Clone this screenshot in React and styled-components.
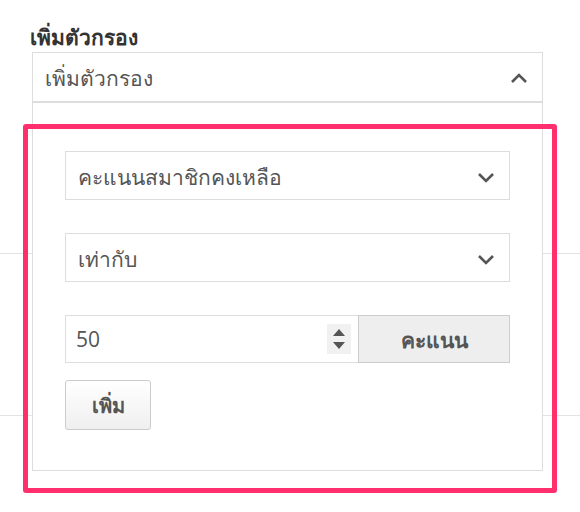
import React from 'react';
import styled, { createGlobalStyle } from 'styled-components';

const GlobalStyle = createGlobalStyle`
  html, body {
    margin: 0;
    padding: 0;
    background: #fff;
  }
  body {
    font-family: "Open Sans", "Noto Sans", sans-serif;
    color: #555;
  }
  * {
    box-sizing: border-box;
  }
`;

const Page = styled.div`
  position: relative;
  width: 580px;
  height: 512px;
  overflow: hidden;
`;

const Title = styled.div`
  height: 52px;
  padding-left: 30px;
  padding-top: 22px;
  font-size: 21px;
  line-height: 30px;
  font-weight: 700;
  color: #333;
`;

const FilterBox = styled.div`
  position: relative;
  margin-left: 32px;
  width: 511px;
`;

const SelectBar = styled.div`
  display: flex;
  align-items: center;
  justify-content: space-between;
  height: 50px;
  padding: 3px 14px 0 12px;
  border: 1px solid #ddd;
  background: #fff;
  font-size: 21px;
  color: #555;
`;

const BackRow = styled.div`
  height: ${({ $height }) => $height}px;
  border-bottom: 1px solid #e3e3e3;
`;

const Dropdown = styled.div`
  position: absolute;
  top: 100%;
  left: 0;
  width: 511px;
  height: 369px;
  background: #fff;
  border: 1px solid #ddd;
  padding: 48px 32px 0 32px;
  display: flex;
  flex-direction: column;
`;

const Field = styled(SelectBar)`
  height: 49px;
  margin-bottom: 33px;
`;

const NumberRow = styled.div`
  display: flex;
  height: 48px;
  margin-bottom: 17px;
`;

const NumberInput = styled.div`
  flex: 1;
  display: flex;
  align-items: center;
  justify-content: space-between;
  padding: 0 7px 0 10px;
  border: 1px solid #ddd;
  border-right: none;
  font-size: 21px;
  color: #555;
`;

const Spinner = styled.div`
  width: 24px;
  height: 30px;
  background: #f1f1f1;
  display: flex;
  align-items: center;
  justify-content: center;
`;

const Addon = styled.div`
  width: 152px;
  display: flex;
  align-items: center;
  justify-content: center;
  padding-top: 2px;
  background: #eee;
  border: 1px solid #ccc;
  font-size: 21px;
  font-weight: 600;
  color: #555;
`;

const AddButton = styled.button`
  width: 86px;
  height: 50px;
  border: 1px solid #ccc;
  border-radius: 3px;
  background: linear-gradient(#fff, #efefef);
  font-family: inherit;
  font-size: 20px;
  font-weight: 600;
  color: #555;
  padding: 2px 0 0;
`;

const Highlight = styled.div`
  position: absolute;
  left: 23px;
  top: 124px;
  width: 534px;
  height: 369px;
  border: 5px solid #ff2e6c;
  border-radius: 3px;
  pointer-events: none;
`;

const Chevron = ({ up }) => (
  <svg width="18" height="11" viewBox="0 0 18 11">
    <polyline
      points={up ? '2,9 9,2 16,9' : '2,2 9,9 16,2'}
      fill="none"
      stroke="#555"
      strokeWidth="2.6"
    />
  </svg>
);

const SpinArrows = () => (
  <svg width="14" height="22" viewBox="0 0 14 22">
    <polygon points="7,1 13,8 1,8" fill="#555" />
    <polygon points="1,14 13,14 7,21" fill="#555" />
  </svg>
);

const App = () => (
  <Page>
    <GlobalStyle />
    <Title>เพิ่มตัวกรอง</Title>
    <FilterBox>
      <SelectBar>
        <span>เพิ่มตัวกรอง</span>
        <Chevron up />
      </SelectBar>
      <Dropdown>
        <Field>
          <span>คะแนนสมาชิกคงเหลือ</span>
          <Chevron />
        </Field>
        <Field>
          <span>เท่ากับ</span>
          <Chevron />
        </Field>
        <NumberRow>
          <NumberInput>
            <span>50</span>
            <Spinner>
              <SpinArrows />
            </Spinner>
          </NumberInput>
          <Addon>คะแนน</Addon>
        </NumberRow>
        <div>
          <AddButton type="button">เพิ่ม</AddButton>
        </div>
      </Dropdown>
    </FilterBox>
    <BackRow $height={152} />
    <BackRow $height={162} />
    <Highlight />
  </Page>
);

export default App;
